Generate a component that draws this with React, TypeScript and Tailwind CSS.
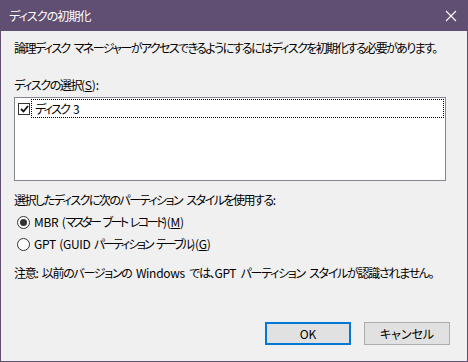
import React from "react";

const font = {
  fontFamily: '"Noto Sans CJK JP", "Noto Sans", sans-serif',
};

function Radio({ checked }: { checked?: boolean }) {
  return (
    <span className="relative inline-flex h-[13px] w-[13px] shrink-0 items-center justify-center rounded-full border border-[#333333] bg-white">
      {checked && <span className="h-[7px] w-[7px] rounded-full bg-[#333333]" />}
    </span>
  );
}

export default function App() {
  return (
    <div
      className="flex h-[362px] w-[468px] flex-col overflow-hidden border-x border-b border-[#604f73] bg-[#f0f0f0] text-[12px] leading-4 whitespace-nowrap text-black [font-feature-settings:'palt'] [word-spacing:3px]"
      style={font}
    >
      <div className="flex h-[31px] shrink-0 items-center justify-between bg-[#604f73] pl-[8px] pr-[8px] text-white">
        <span className="text-[12px] tracking-[-0.9px]">ディスクの初期化</span>
        <svg width="12" height="12" viewBox="0 0 12 12" className="mr-[2px]">
          <path d="M1 1 L11 11 M11 1 L1 11" stroke="white" strokeWidth="1.1" />
        </svg>
      </div>
      <div className="flex flex-1 flex-col px-[12px]">
        <div className="mt-[9px] pl-[1px] tracking-[-1.6px]">
          論理ディスク マネージャーがアクセスできるようにするにはディスクを初期化する必要があります。
        </div>
        <div className="mt-[21px] pl-[1px] tracking-[-1.4px]">
          ディスクの選択<span className="tracking-[-0.2px]">(<span className="underline">S</span>):</span>
        </div>
        <div className="mt-[4px] ml-[1px] mr-[9px] h-[84px] border border-[#828790] bg-white p-[1px]">
          <div className="flex items-center">
            <span className="ml-[2px] flex h-[12px] w-[12px] items-center justify-center border border-[#333333] bg-white">
              <svg width="9" height="8" viewBox="0 0 9 8">
                <path d="M1 4 L3.5 6.5 L8 1" stroke="#111" strokeWidth="1.8" fill="none" />
              </svg>
            </span>
            <div className="ml-[1px] flex h-[19px] flex-1 items-center border border-dotted border-black pl-[3px] tracking-[-1.8px]">
              ディスク 3
            </div>
          </div>
        </div>
        <div className="mt-[11px] pl-[1px] tracking-[-1.5px]">
          選択したディスクに次のパーティション スタイルを使用する:
        </div>
        <div className="mt-[6px] flex items-center gap-[4px] pl-[4px]">
          <Radio checked />
          <span className="tracking-[-0.3px] [word-spacing:1px]">
            MBR (<span className="tracking-[-2.5px] [word-spacing:3px]">マスター ブート レコード</span>)(<span className="underline">M</span>)
          </span>
        </div>
        <div className="mt-[6px] flex items-center gap-[4px] pl-[4px]">
          <Radio />
          <span className="tracking-[-0.3px] [word-spacing:1px]">
            GPT (GUID <span className="tracking-[-2.1px] [word-spacing:3px]">パーティション テーブル</span>)(<span className="underline">G</span>)
          </span>
        </div>
        <div className="mt-[13px] pl-[1px] tracking-[-1.3px]">
          注意: 以前のバージョンの <span className="tracking-[-0.3px]">Windows</span> では、<span className="tracking-[-0.3px]">GPT</span> パーティション スタイルが認識されません。
        </div>
        <div className="mt-[41px] flex justify-end gap-[13px] pr-[5px] tracking-normal">
          <button className="h-[23px] w-[86px] border-2 border-[#0078d7] bg-[#e1e1e1] text-[12px] leading-4">
            OK
          </button>
          <button className="h-[23px] w-[86px] border border-[#adadad] bg-[#e1e1e1] text-[12px] leading-4">
            キャンセル
          </button>
        </div>
      </div>
    </div>
  );
}
